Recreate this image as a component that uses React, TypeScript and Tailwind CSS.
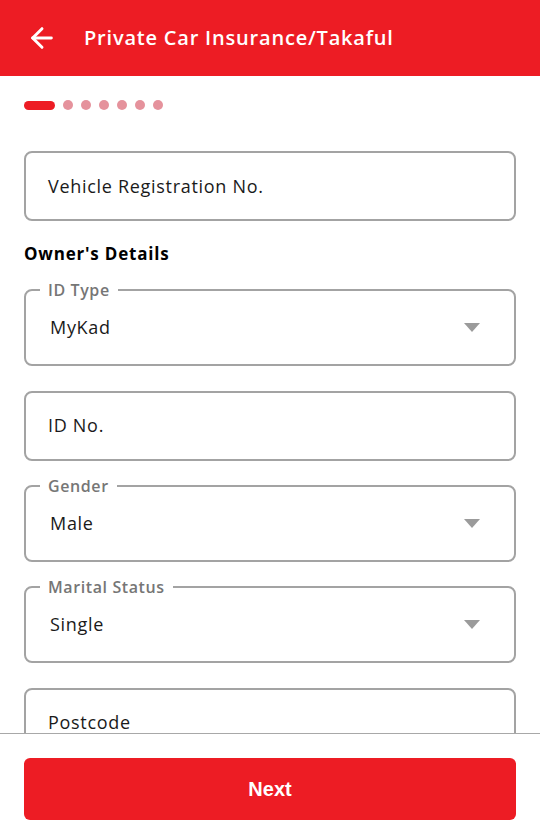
import { ArrowLeft } from "lucide-react";

const font = { fontFamily: "'Open Sans', Lato, sans-serif" };

function TextField({ placeholder }: { placeholder: string }) {
  return (
    <div className="h-[70px] rounded-lg border-2 border-[#a3a3a3] flex items-center px-[22px]">
      <span className="text-[18px] text-[#1a1a1a] tracking-[0.7px]">{placeholder}</span>
    </div>
  );
}

function SelectField({ label, value }: { label: string; value: string }) {
  return (
    <fieldset className="h-[86px] rounded-lg border-2 border-[#a3a3a3] px-[14px] -mt-[10px]">
      <legend className="px-[8px] text-[16px] font-semibold text-[#767676] leading-5 tracking-[0.6px]">
        {label}
      </legend>
      <div className="flex items-center justify-between h-[55px] pl-[10px] pr-[20px]">
        <span className="text-[18px] text-[#1a1a1a] tracking-[0.7px]">{value}</span>
        <svg width="16" height="9" viewBox="0 0 16 9">
          <path d="M0 0h16L8 9z" fill="#9b9b9b" />
        </svg>
      </div>
    </fieldset>
  );
}

export default function App() {
  return (
    <div className="h-[835px] flex flex-col bg-white" style={font}>
      <header className="h-[76px] shrink-0 bg-[#ed1c24] flex items-center px-[26px] gap-[26px]">
        <ArrowLeft className="text-white" size={32} strokeWidth={2.2} />
        <h1 className="text-white text-[20px] font-semibold tracking-[0.8px]">
          Private Car Insurance/Takaful
        </h1>
      </header>

      <main className="flex-1 overflow-hidden px-[24px]">
        <div className="flex items-center gap-[8px] pt-[24px] pb-[41px]">
          <span className="w-[31px] h-[9px] rounded-full bg-[#ed1c24]" />
          <span className="w-[10px] h-[10px] rounded-full bg-[#e5929c]" />
          <span className="w-[10px] h-[10px] rounded-full bg-[#e5929c]" />
          <span className="w-[10px] h-[10px] rounded-full bg-[#e5929c]" />
          <span className="w-[10px] h-[10px] rounded-full bg-[#e5929c]" />
          <span className="w-[10px] h-[10px] rounded-full bg-[#e5929c]" />
          <span className="w-[10px] h-[10px] rounded-full bg-[#e5929c]" />
        </div>

        <TextField placeholder="Vehicle Registration No." />

        <h2 className="mt-[20px] mb-[23px] text-[17px] font-bold text-black tracking-[0.8px]">
          Owner's Details
        </h2>

        <div className="flex flex-col gap-[25px]">
          <SelectField label="ID Type" value="MyKad" />
          <TextField placeholder="ID No." />
          <SelectField label="Gender" value="Male" />
          <SelectField label="Marital Status" value="Single" />
          <TextField placeholder="Postcode" />
        </div>
      </main>

      <footer className="shrink-0 border-t border-[#a8a8a8] px-[24px] pt-[24px] pb-[15px]">
        <button
          className="w-full h-[62px] rounded-md bg-[#ed1c24] text-white text-[20px] font-bold"
          style={{ fontFamily: "'Liberation Sans', Arial, sans-serif" }}
        >
          Next
        </button>
      </footer>
    </div>
  );
}
